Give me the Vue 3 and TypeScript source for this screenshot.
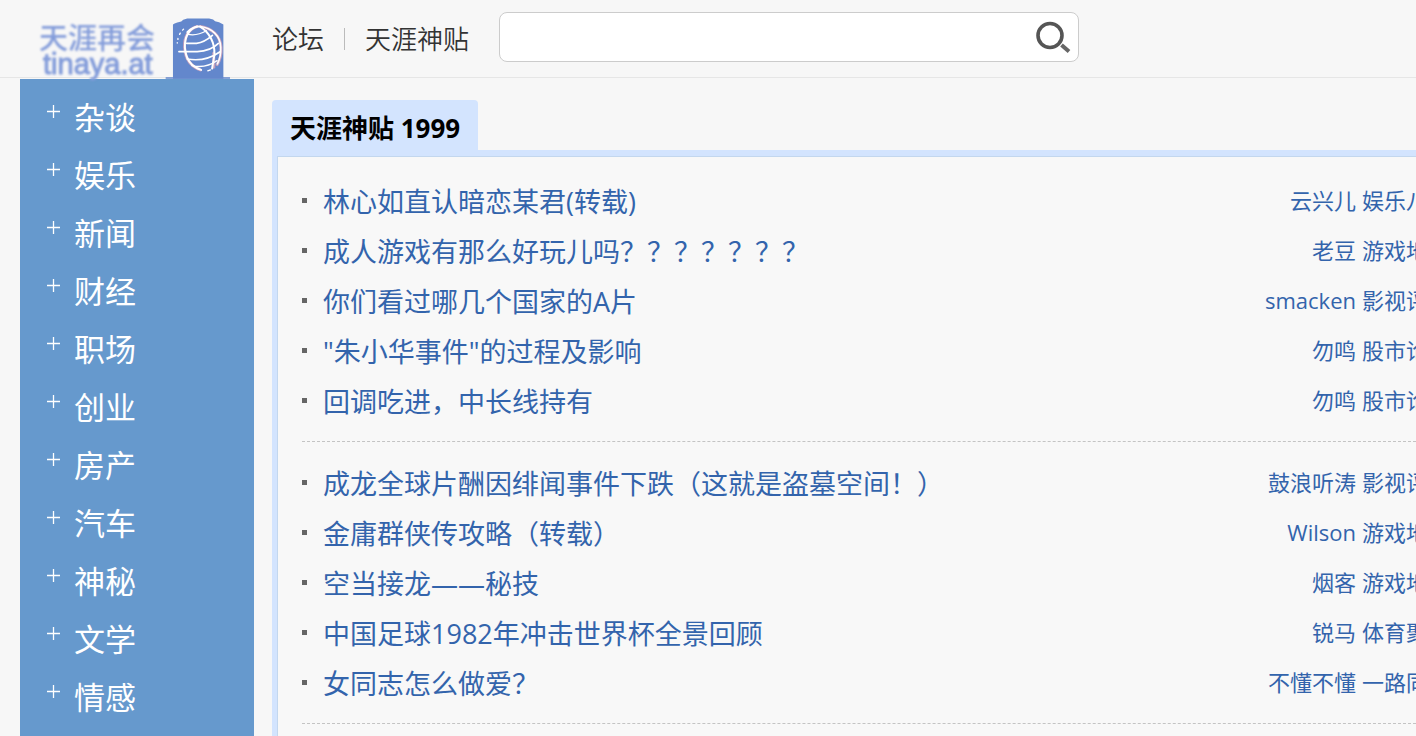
<script setup lang="ts">
interface Post {
  title: string
  author: string
  board: string
}

const channels: string[] = ['杂谈', '娱乐', '新闻', '财经', '职场', '创业', '房产', '汽车', '神秘', '文学', '情感']

const groups: Post[][] = [
  [
    { title: '林心如直认暗恋某君(转载)', author: '云兴儿', board: '娱乐八' },
    { title: '成人游戏有那么好玩儿吗？？？？？？？', author: '老豆', board: '游戏地' },
    { title: '你们看过哪几个国家的A片', author: 'smacken', board: '影视评' },
    { title: '"朱小华事件"的过程及影响', author: '勿鸣', board: '股市论' },
    { title: '回调吃进，中长线持有', author: '勿鸣', board: '股市论' },
  ],
  [
    { title: '成龙全球片酬因绯闻事件下跌（这就是盗墓空间！）', author: '鼓浪听涛', board: '影视评' },
    { title: '金庸群侠传攻略（转载）', author: 'Wilson', board: '游戏地' },
    { title: '空当接龙——秘技', author: '烟客', board: '游戏地' },
    { title: '中国足球1982年冲击世界杯全景回顾', author: '锐马', board: '体育聚' },
    { title: '女同志怎么做爱？', author: '不懂不懂', board: '一路同' },
  ],
]
</script>

<template>
  <div class="page">
    <header class="header">
      <a class="logo" href="#">
        <span class="logo-text">
          <span class="logo-cn">天涯再会</span>
          <span class="logo-en">tinaya.at</span>
        </span>
        <svg class="logo-mark" viewBox="495 54 196 183" aria-hidden="true">
          <path d="M519 237V73L524 70L532 67L544 64L550 59L562 55H628L640 58L646 63L658 66L671 73V237Z" fill="#6387cc" />
          <path d="M497 232H691V237H497Z" fill="#6387cc" />
          <g fill="none" stroke="#efaab4" stroke-width="9" stroke-linecap="round" opacity=".7">
            <path d="M602 79C636 84 662 106 664 142C665 164 660 182 652 194" />
            <path d="M592 79C566 86 552 112 554 142C556 176 574 200 602 210" />
            <path d="M642 160V202" />
          </g>
          <g fill="none" stroke="#fff" stroke-width="5" stroke-linecap="round">
            <path d="M562 96C574 84 588 79 602 79C636 84 662 106 663 142C664 162 660 178 653 192" />
            <path d="M592 79C566 86 554 112 555 142C557 176 574 200 604 210" stroke-width="6" />
            <path d="M602 80C628 96 646 128 644 164L637 206" stroke-width="6" />
            <path d="M562 102C584 108 602 102 620 92" stroke-width="4" />
            <path d="M560 130H590C606 128 622 120 638 106" />
            <path d="M537 155H592C614 154 640 146 656 130" />
            <path d="M562 177C600 184 634 174 660 156" />
            <path d="M576 197C606 204 632 196 652 182" stroke-width="4" />
            <path d="M551 87L548 90M541 99L539 103M534 115V118M532 128V129" stroke-width="4" />
            <path d="M624 213L632 210" stroke-width="4" />
          </g>
        </svg>
      </a>
      <nav class="nav">
        <a href="#">论坛</a>
        <span class="divider"></span>
        <a href="#">天涯神贴</a>
      </nav>
      <form class="search" @submit.prevent>
        <input type="text" aria-label="搜索" />
        <button type="submit" aria-label="搜索">
          <svg viewBox="0 0 36 34" aria-hidden="true">
            <circle cx="15" cy="15.500" r="12" fill="none" stroke="#555" stroke-width="3.600" />
            <path d="M26.500 25L34 31.500" stroke="#666" stroke-width="4" />
          </svg>
        </button>
      </form>
    </header>

    <div class="body">
      <aside class="sidebar">
        <a v-for="name in channels" :key="name" href="#" class="channel">
          <svg viewBox="0 0 13 13" aria-hidden="true">
            <path d="M6.500 0V13M0 6.500H13" stroke="#fff" stroke-width="1.300" />
          </svg>
          <span>{{ name }}</span>
        </a>
      </aside>

      <main class="main">
        <h2 class="tab">天涯神贴 1999</h2>
        <div class="panel">
          <ul v-for="(posts, g) in groups" :key="g" class="group">
            <li v-for="post in posts" :key="post.title" class="row">
              <a href="#" class="title">{{ post.title }}</a>
              <a href="#" class="author">{{ post.author }}</a>
              <a href="#" class="board">{{ post.board }}</a>
            </li>
          </ul>
        </div>
      </main>
    </div>
  </div>
</template>

<style>
body {
  background: #f7f7f7;
}
</style>

<style scoped>
.page {
  height: 100vh;
  display: flex;
  flex-direction: column;
  overflow: hidden;
  background: #f7f7f7;
  font-family: "Open Sans", "Noto Sans CJK SC", sans-serif;
}

a {
  text-decoration: none;
}

.header {
  flex: none;
  box-sizing: border-box;
  height: 78px;
  display: flex;
  align-items: center;
  padding-left: 39px;
  border-bottom: 1px solid #e6e6e6;
}

.logo {
  align-self: flex-end;
  display: flex;
  align-items: flex-end;
  width: 233px;
  margin-bottom: -2px;
  color: #839cda;
}

.logo-text {
  display: flex;
  flex-direction: column;
  width: 126px;
  padding-bottom: 3px;
  filter: blur(1px);
}

.logo-cn {
  font-size: 29px;
  line-height: 28px;
  font-weight: 500;
}

.logo-en {
  padding-left: 4px;
  font-family: "Liberation Sans", Arial, sans-serif;
  font-size: 29px;
  line-height: 24px;
  -webkit-text-stroke: 1px #839cda;
}

.logo-mark {
  width: 65px;
  height: 61px;
}

.nav {
  display: flex;
  align-items: center;
  width: 227px;
  font-size: 26px;
  line-height: 38px;
  font-weight: 350;
}

.nav a {
  color: #333;
  white-space: nowrap;
}

.divider {
  width: 1px;
  height: 22px;
  margin: 0 20px;
  background: #bbb;
}

.search {
  box-sizing: border-box;
  display: flex;
  align-items: center;
  width: 580px;
  height: 50px;
  margin-bottom: 3px;
  padding-right: 7px;
  border: 1px solid #ccc;
  border-radius: 8px;
  background: #fff;
}

.search input {
  flex: 1;
  min-width: 0;
  height: 44px;
  padding: 0 12px;
  border: 0;
  outline: 0;
  background: transparent;
  font: inherit;
  font-size: 24px;
}

.search button {
  display: flex;
  padding: 0;
  border: 0;
  background: none;
}

.search svg {
  width: 36px;
  height: 34px;
}

.body {
  flex: 1;
  min-height: 0;
  display: flex;
  padding: 1px 0 0 20px;
}

.sidebar {
  flex: none;
  box-sizing: border-box;
  width: 234px;
  padding-top: 9px;
  background: #6699cd;
}

.channel {
  display: flex;
  align-items: center;
  gap: 14px;
  height: 58px;
  padding-left: 27px;
  color: #fff;
  font-size: 31px;
  line-height: 44px;
}

.channel svg {
  width: 13px;
  height: 13px;
  margin-bottom: 12px;
}

.main {
  flex: 1;
  min-width: 0;
  display: flex;
  flex-direction: column;
  align-items: flex-start;
  padding: 21px 0 0 18px;
}

.tab {
  margin: 0;
  padding: 6px 18px 0;
  border-radius: 4px 4px 0 0;
  background: #d3e4fe;
  color: #000;
  font-size: 26px;
  line-height: 44px;
  font-weight: 700;
}

.panel {
  flex: 1;
  box-sizing: border-box;
  width: 100%;
  padding: 21px 0 0 25px;
  border-top: 6px solid #d3e4fe;
  border-left: 5px solid #d3e4fe;
  background: #f8f8f8;
  box-shadow: inset 1px 1px #c3d7ee;
}

.group {
  margin: 0 0 17px;
  padding: 0 0 14px;
  border-bottom: 1px dashed #c4c4c4;
  list-style: none;
}

.row {
  display: flex;
  align-items: center;
  height: 50px;
  white-space: nowrap;
}

.row::before {
  content: "";
  width: 5px;
  height: 5px;
  margin: 0 16px 4px 0;
  background: #666;
}

.row a {
  color: #3364ac;
}

.title {
  flex: 1;
  font-size: 27px;
  line-height: 40px;
}

.author,
.board {
  margin-bottom: 5px;
  font-size: 22px;
  line-height: 32px;
}

.board {
  width: 54px;
  margin-left: 6px;
  overflow: hidden;
}
</style>
